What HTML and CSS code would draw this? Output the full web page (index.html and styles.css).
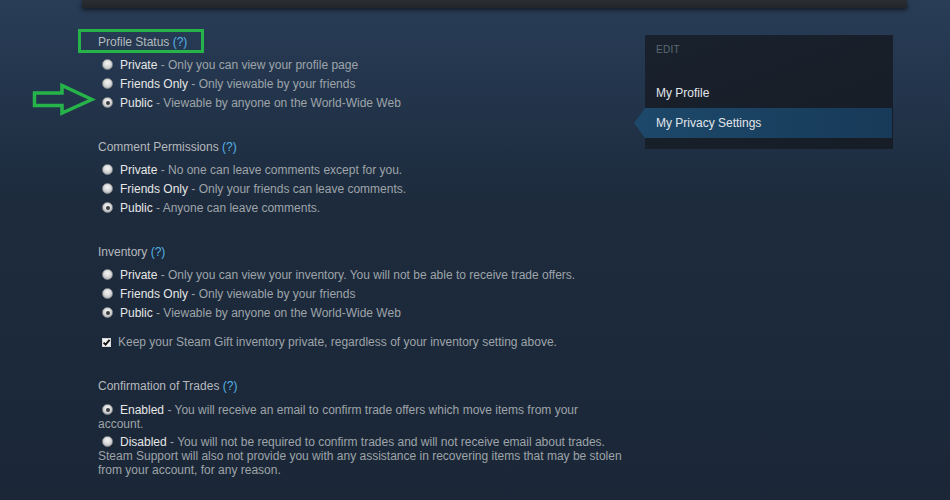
FILE: index.html
```html
<!DOCTYPE html>
<html>
<head>
<meta charset="utf-8">
<link rel="stylesheet" href="styles.css">
</head>
<body>
<div class="topbar"></div>
<div class="page">
  <div class="content">
    <div class="section">
      <div class="heading boxed">Profile Status <span class="help">(?)</span></div>
      <div class="opt"><span class="radio"></span><span class="lbl">Private</span>&nbsp;- Only you can view your profile page</div>
      <div class="opt"><span class="radio"></span><span class="lbl">Friends Only</span>&nbsp;- Only viewable by your friends</div>
      <div class="opt"><span class="radio checked"></span><span class="lbl">Public</span>&nbsp;- Viewable by anyone on the World-Wide Web</div>
    </div>
    <div class="section">
      <div class="heading">Comment Permissions <span class="help">(?)</span></div>
      <div class="opt"><span class="radio"></span><span class="lbl">Private</span>&nbsp;- No one can leave comments except for you.</div>
      <div class="opt"><span class="radio"></span><span class="lbl">Friends Only</span>&nbsp;- Only your friends can leave comments.</div>
      <div class="opt"><span class="radio checked"></span><span class="lbl">Public</span>&nbsp;- Anyone can leave comments.</div>
    </div>
    <div class="section">
      <div class="heading">Inventory <span class="help">(?)</span></div>
      <div class="opt"><span class="radio"></span><span class="lbl">Private</span>&nbsp;- Only you can view your inventory. You will not be able to receive trade offers.</div>
      <div class="opt"><span class="radio"></span><span class="lbl">Friends Only</span>&nbsp;- Only viewable by your friends</div>
      <div class="opt"><span class="radio checked"></span><span class="lbl">Public</span>&nbsp;- Viewable by anyone on the World-Wide Web</div>
      <div class="check-row"><span class="checkbox"><svg width="9" height="9" viewBox="0 0 9 9"><path d="M1.6 4.6 L3.6 6.6 L7.6 1.8" fill="none" stroke="#111" stroke-width="1.8"/></svg></span>Keep your Steam Gift inventory private, regardless of your inventory setting above.</div>
    </div>
    <div class="section">
      <div class="heading">Confirmation of Trades <span class="help">(?)</span></div>
      <div class="para first"><span class="radio inline checked"></span><span class="lbl">Enabled</span> - You will receive an email to confirm trade offers which move items from your<br>account.</div>
      <div class="para"><span class="radio inline"></span><span class="lbl">Disabled</span> - You will not be required to confirm trades and will not receive email about trades.<br>Steam Support will also not provide you with any assistance in recovering items that may be stolen<br>from your account, for any reason.</div>
    </div>
  </div>
  <div class="sidebar">
    <div class="side-title">EDIT</div>
    <div class="side-item">My Profile</div>
    <div class="side-item active">My Privacy Settings</div>
  </div>
</div>
<svg class="arrow" width="66" height="34" viewBox="0 0 66 34">
  <polygon points="4.5,11 32,11 32,3.5 62,17.5 32,31 32,23.5 4.5,23.5" fill="none" stroke="#26b44a" stroke-width="3.5" stroke-linejoin="miter"/>
</svg>
</body>
</html>
```

FILE: styles.css
```css
html, body {
  margin: 0;
  padding: 0;
}
body {
  width: 950px;
  height: 500px;
  overflow: hidden;
  font-family: "Liberation Sans", Arial, sans-serif;
  font-size: 12px;
  color: #9ea4a9;
  background: linear-gradient(180deg, #293d57 0px, #23354c 90px, #1d2b3d 200px, #1b2737 500px);
  position: relative;
}
.topbar {
  margin-left: 82px;
  width: 825px;
  height: 8px;
  background: linear-gradient(180deg, #2b2e33, #222529);
  box-shadow: 0 2px 5px rgba(0, 0, 0, 0.6);
}
.page {
  display: flex;
  padding-left: 98px;
}
.content {
  width: 547px;
  padding-top: 25px;
}
.section {
  margin-bottom: 25px;
}
.heading {
  line-height: 19px;
  height: 19px;
  color: #b5b9bd;
  margin-bottom: 4px;
}
.heading.boxed {
  position: relative;
}
.heading.boxed::before {
  content: "";
  position: absolute;
  left: -20px;
  top: -4px;
  width: 126px;
  height: 24px;
  box-sizing: border-box;
  border: 3px solid #26b44a;
}
.help {
  color: #55b2e6;
}
.opt {
  display: flex;
  align-items: center;
  height: 19px;
  line-height: 19px;
  white-space: nowrap;
}
.radio {
  display: inline-block;
  box-sizing: border-box;
  width: 11px;
  height: 11px;
  border-radius: 50%;
  margin-left: 4px;
  margin-right: 7px;
  margin-top: -2px;
  background: radial-gradient(circle at 50% 35%, #f4f4f4 0, #dcdcdc 45%, #a9abad 100%);
  border: 1px solid #8a8d90;
  position: relative;
  flex: none;
}
.radio.checked::after {
  content: "";
  position: absolute;
  left: 2.5px;
  top: 2.5px;
  width: 4px;
  height: 4px;
  border-radius: 50%;
  background: #3a3d40;
}
.radio.inline {
  vertical-align: -1px;
  margin-top: 0;
}
.lbl {
  color: #e6e6e6;
}
.check-row {
  display: flex;
  align-items: center;
  height: 19px;
  line-height: 19px;
  margin-top: 10px;
  white-space: nowrap;
}
.checkbox {
  display: inline-flex;
  box-sizing: border-box;
  width: 9px;
  height: 9px;
  margin-left: 4px;
  margin-right: 7px;
  margin-top: -1px;
  background: #f2f2f2;
  border: 1px solid #d8d8d8;
  align-items: center;
  justify-content: center;
  flex: none;
}
.checkbox svg {
  display: block;
  flex: none;
}
.para {
  line-height: 14px;
  margin-top: 4px;
  white-space: nowrap;
}
.para.first {
  margin-top: 7px;
}
.sidebar {
  width: 248px;
  margin-top: 27px;
  align-self: flex-start;
  box-sizing: border-box;
  padding: 8px 0 11px 0;
  background: linear-gradient(160deg, #19212c, #161d27);
}
.side-title {
  font-size: 10px;
  line-height: 14px;
  color: #5d6a77;
  padding-left: 11px;
  letter-spacing: 0.3px;
  margin-bottom: 21px;
}
.side-item {
  height: 30px;
  line-height: 30px;
  padding-left: 11px;
  color: #e2e6ea;
  position: relative;
}
.side-item.active {
  background: linear-gradient(90deg, #1d4869, #173a58);
  margin-right: 1px;
}
.side-item.active::before {
  content: "";
  position: absolute;
  left: -11px;
  top: 0;
  width: 0;
  height: 0;
  border-top: 15px solid transparent;
  border-bottom: 15px solid transparent;
  border-right: 11px solid #1d4869;
}
.arrow {
  position: absolute;
  left: 30px;
  top: 82px;
}
```
